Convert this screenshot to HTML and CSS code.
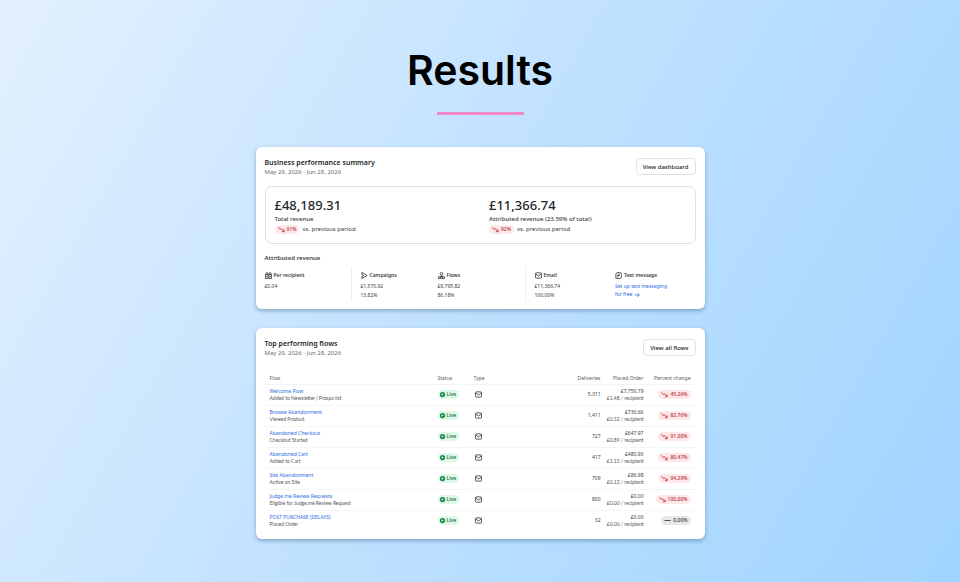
FILE: index.html
```html
<!DOCTYPE html>
<html lang="en">
<head>
    <meta charset="UTF-8">
    <meta name="viewport" content="width=device-width, initial-scale=1.0">
    <title>Results</title>
    <link rel="stylesheet" href="styles.css">
</head>
<body>

    <!-- Icons -->
    <svg class="sprite" aria-hidden="true">
        <symbol id="down" viewBox="0 0 16 16"><path d="M1 3l4 5 3-2 5 6M9 13h5V8"/></symbol>
        <symbol id="minus" viewBox="0 0 16 16"><path d="M1 8h14"/></symbol>
        <symbol id="arrow" viewBox="0 0 16 16"><path d="M2 8h12M9 3l5 5-5 5"/></symbol>
        <symbol id="mail" viewBox="0 0 16 16"><rect x="1" y="2" width="14" height="12" rx="2"/><path d="M2 5l6 4 6-4"/></symbol>
        <symbol id="people" viewBox="0 0 16 16"><path d="M1 15V6h6v9zM9 15V6h6v9zM2 6V4a2 2 0 0 1 5 0v2M9 6V4a2 2 0 0 1 5 0v2M4 9v3M12 9v3"/></symbol>
        <symbol id="send" viewBox="0 0 16 16"><path d="M2 1l12 7-12 7V10l4-2-4-2z"/></symbol>
        <symbol id="flow" viewBox="0 0 16 16"><circle cx="8" cy="4" r="3"/><path d="M8 7v3M4 10h8M1 11h5v4H1zM10 11h5v4h-5zM6 14h4"/></symbol>
        <symbol id="chat" viewBox="0 0 16 16"><path d="M6 1h4a5 5 0 0 1 5 5v4a5 5 0 0 1-5 5H2V6a5 5 0 0 1 4-5zM6 5h5M5 8h6M5 11h3"/></symbol>
        <symbol id="live" viewBox="0 0 16 16"><path fill="currentColor" stroke="none" fill-rule="evenodd" d="M8 2a6 6 0 1 1 0 12A6 6 0 0 1 8 2zM6 5v6l5-3z"/></symbol>
    </svg>

    <section class="results">
        <h1>Results</h1>

        <div class="card">
            <div class="card-header">
                <div>
                    <h2>Business performance summary</h2>
                    <p class="date">May 29, 2026 - Jun 28, 2026</p>
                </div>
                <button class="button">View dashboard</button>
            </div>

            <div class="totals">
                <div>
                    <p class="amount">£48,189.31</p>
                    <p class="label">Total revenue</p>
                    <p class="change"><span class="badge red"><svg><use href="#down"/></svg>91%</span> vs. previous period</p>
                </div>
                <div>
                    <p class="amount">£11,366.74</p>
                    <p class="label">Attributed revenue (23.59% of total)</p>
                    <p class="change"><span class="badge red"><svg><use href="#down"/></svg>92%</span> vs. previous period</p>
                </div>
            </div>

            <h3>Attributed revenue</h3>
            <div class="channels">
                <div class="group">
                    <div class="channel">
                        <h4><svg><use href="#people"/></svg>Per recipient</h4>
                        <p>£0.04</p>
                    </div>
                </div>
                <div class="group split">
                    <div class="channel">
                        <h4><svg><use href="#send"/></svg>Campaigns</h4>
                        <p>£1,570.92</p>
                        <p>13.82%</p>
                    </div>
                    <div class="channel">
                        <h4><svg><use href="#flow"/></svg>Flows</h4>
                        <p>£9,795.82</p>
                        <p>86.18%</p>
                    </div>
                </div>
                <div class="group split">
                    <div class="channel">
                        <h4><svg><use href="#mail"/></svg>Email</h4>
                        <p>£11,366.74</p>
                        <p>100.00%</p>
                    </div>
                    <div class="channel">
                        <h4><svg><use href="#chat"/></svg>Text message</h4>
                        <a href="#">Set up text messaging<br>for free <svg><use href="#arrow"/></svg></a>
                    </div>
                </div>
            </div>
        </div>

        <div class="card">
            <div class="card-header">
                <div>
                    <h2>Top performing flows</h2>
                    <p class="date">May 29, 2026 - Jun 28, 2026</p>
                </div>
                <button class="button">View all flows</button>
            </div>

            <table>
                <thead>
                    <tr>
                        <th class="col-flow">Flow</th>
                        <th class="col-status">Status</th>
                        <th class="col-type">Type</th>
                        <th class="num">Deliveries</th>
                        <th class="num col-order">Placed Order</th>
                        <th class="num col-change">Percent change</th>
                    </tr>
                </thead>
                <tbody>
                    <tr>
                        <td><a href="#">Welcome Flow</a><small>Added to Newsletter | Prospa list</small></td>
                        <td><span class="badge green"><svg><use href="#live"/></svg>Live</span></td>
                        <td class="type"><svg><use href="#mail"/></svg></td>
                        <td class="num">5,311</td>
                        <td class="num">£7,750.79<small>£1.48 / recipient</small></td>
                        <td class="num"><span class="badge red"><svg><use href="#down"/></svg>45.26%</span></td>
                    </tr>
                    <tr>
                        <td><a href="#">Browse Abandonment</a><small>Viewed Product</small></td>
                        <td><span class="badge green"><svg><use href="#live"/></svg>Live</span></td>
                        <td class="type"><svg><use href="#mail"/></svg></td>
                        <td class="num">1,411</td>
                        <td class="num">£730.66<small>£0.52 / recipient</small></td>
                        <td class="num"><span class="badge red"><svg><use href="#down"/></svg>82.76%</span></td>
                    </tr>
                    <tr>
                        <td><a href="#">Abandoned Checkout</a><small>Checkout Started</small></td>
                        <td><span class="badge green"><svg><use href="#live"/></svg>Live</span></td>
                        <td class="type"><svg><use href="#mail"/></svg></td>
                        <td class="num">727</td>
                        <td class="num">£647.97<small>£0.89 / recipient</small></td>
                        <td class="num"><span class="badge red"><svg><use href="#down"/></svg>91.00%</span></td>
                    </tr>
                    <tr>
                        <td><a href="#">Abandoned Cart</a><small>Added to Cart</small></td>
                        <td><span class="badge green"><svg><use href="#live"/></svg>Live</span></td>
                        <td class="type"><svg><use href="#mail"/></svg></td>
                        <td class="num">417</td>
                        <td class="num">£480.93<small>£1.15 / recipient</small></td>
                        <td class="num"><span class="badge red"><svg><use href="#down"/></svg>80.47%</span></td>
                    </tr>
                    <tr>
                        <td><a href="#">Site Abandonment</a><small>Active on Site</small></td>
                        <td><span class="badge green"><svg><use href="#live"/></svg>Live</span></td>
                        <td class="type"><svg><use href="#mail"/></svg></td>
                        <td class="num">709</td>
                        <td class="num">£86.98<small>£0.12 / recipient</small></td>
                        <td class="num"><span class="badge red"><svg><use href="#down"/></svg>94.29%</span></td>
                    </tr>
                    <tr>
                        <td><a href="#">Judge.me Review Requests</a><small>Eligible for Judge.me Review Request</small></td>
                        <td><span class="badge green"><svg><use href="#live"/></svg>Live</span></td>
                        <td class="type"><svg><use href="#mail"/></svg></td>
                        <td class="num">800</td>
                        <td class="num">£0.00<small>£0.00 / recipient</small></td>
                        <td class="num"><span class="badge red"><svg><use href="#down"/></svg>100.00%</span></td>
                    </tr>
                    <tr>
                        <td><a href="#">POST PURCHASE (DELAYS)</a><small>Placed Order</small></td>
                        <td><span class="badge green"><svg><use href="#live"/></svg>Live</span></td>
                        <td class="type"><svg><use href="#mail"/></svg></td>
                        <td class="num">32</td>
                        <td class="num">£0.00<small>£0.00 / recipient</small></td>
                        <td class="num"><span class="badge grey"><svg><use href="#minus"/></svg>0.00%</span></td>
                    </tr>
                </tbody>
            </table>
        </div>
    </section>

</body>
</html>
```
FILE: styles.css
```css
* {
    margin: 0;
    padding: 0;
    box-sizing: border-box;
}

body {
    font-family: 'Noto Sans', 'Open Sans', sans-serif;
    font-size: 5px;
    line-height: 8px;
    color: #3a3d40;
    min-height: 100vh;
    background: linear-gradient(120deg, #e3f0ff 0%, #bfe1ff 50%, #a0d4ff 100%);
}

.sprite {
    display: none;
}

svg {
    width: 7px;
    height: 7px;
    fill: none;
    stroke: currentColor;
    stroke-width: 2;
    flex-shrink: 0;
}

a {
    color: #2b6be0;
    text-decoration: none;
}

a svg {
    width: 6px;
    height: 6px;
    vertical-align: middle;
}

.results {
    display: flex;
    flex-direction: column;
    align-items: center;
    gap: 19px;
    padding: 45px 20px 43px;
}

h1 {
    font-family: 'Inter', sans-serif;
    font-size: 41px;
    font-weight: 600;
    line-height: 50px;
    color: #000;
}

/* Pink line under the heading */
h1::after {
    content: '';
    display: block;
    width: 87px;
    height: 3px;
    margin: 17px auto 13px;
    background: #f28ac9;
}

.card {
    width: 100%;
    max-width: 449px;
    padding: 11px 9px 8px;
    background: #fff;
    border-radius: 6px;
    box-shadow: 0 2px 4px rgba(40, 80, 120, 0.4);
}

.card-header {
    display: flex;
    justify-content: space-between;
    align-items: flex-start;
}

h2 {
    font-size: 7px;
    font-weight: 600;
    line-height: 10px;
    color: #232629;
}

.date {
    font-size: 6px;
    line-height: 9px;
    color: #6a6d70;
}

.button {
    height: 17px;
    padding: 0 6px;
    font-family: inherit;
    font-size: 6px;
    font-weight: 500;
    color: #232629;
    background: #fff;
    border: 1px solid #dfe2e5;
    border-radius: 4px;
    cursor: pointer;
}

.totals {
    display: grid;
    grid-template-columns: 1fr 1fr;
    gap: 9px;
    margin-top: 9px;
    padding: 9px 0 9px 9px;
    border: 1px solid #dce1e4;
    border-radius: 7px;
}

.amount {
    font-size: 13px;
    font-weight: 500;
    line-height: 18px;
    color: #232629;
}

.label {
    margin-top: 1px;
    font-size: 6px;
    font-weight: 500;
}

.change {
    display: flex;
    align-items: center;
    gap: 3px;
    margin-top: 1px;
    font-size: 6px;
    line-height: 10px;
}

.badge {
    display: inline-flex;
    align-items: center;
    gap: 1px;
    height: 9px;
    padding: 0 3px;
    font-size: 5px;
    font-weight: 500;
    border-radius: 5px;
}

.red {
    gap: 2px;
    color: #c02c3c;
    background: #fde8e9;
}

.green {
    padding: 0 3px 0 1px;
    color: #1d5c3c;
    background: #ddf8e6;
}

.green svg {
    color: #158a4d;
}

.grey {
    gap: 2px;
    background: #e6e8ea;
}

h3 {
    margin: 9px 0 4px;
    font-size: 6px;
    font-weight: 600;
    line-height: 10px;
}

.channels {
    display: grid;
    grid-template-columns: 86fr 174fr 171fr;
}

.group {
    min-height: 34px;
}

.split {
    display: grid;
    grid-template-columns: 77fr 87fr;
    padding-left: 9px;
    border-left: 1px solid #edeff1;
}

.split:last-child {
    grid-template-columns: 1fr 1fr;
}

.channel {
    padding-top: 4px;
}

.channel p {
    line-height: 9px;
}

h4 {
    display: flex;
    align-items: center;
    gap: 2px;
    margin-bottom: 2px;
    font-size: 5px;
    font-weight: 600;
    line-height: 9px;
}

table {
    width: 100%;
    margin-top: 13px;
    table-layout: fixed;
    border-collapse: collapse;
    text-align: left;
}

th {
    height: 13px;
    padding: 2px 5px 0;
    font-weight: 400;
    color: #5a5d60;
}

td {
    height: 21px;
    padding: 0 5px;
    border-top: 1px solid #f4f5f6;
    line-height: 7px;
    vertical-align: middle;
}

.num {
    padding-left: 0;
    text-align: right;
    white-space: nowrap;
}

td a,
small {
    display: block;
}

small {
    font-family: 'Lato', sans-serif;
    font-size: 5px;
    line-height: 7px;
    color: #55585b;
}

td .badge {
    vertical-align: middle;
}

.type svg {
    display: block;
    margin-left: 1px;
}

.col-flow {
    width: 168px;
}

.col-status {
    width: 36px;
}

.col-type {
    width: 60px;
}

.col-order {
    width: 43px;
}

.col-change {
    width: 47px;
}
```
